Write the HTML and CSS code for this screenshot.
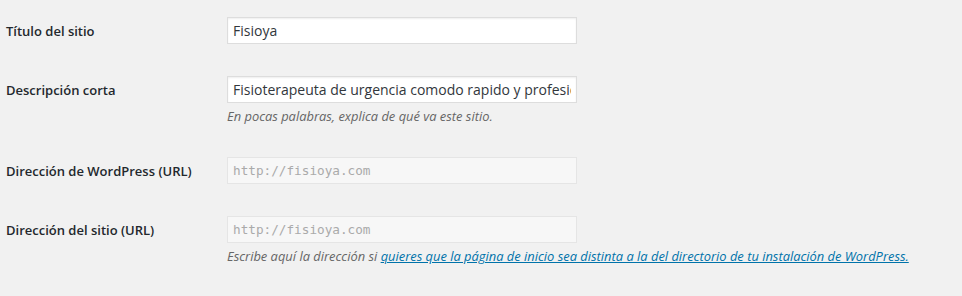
FILE: index.html
```
<!DOCTYPE html>
<html lang="es">
<head>
  <meta charset="utf-8">
  <title>Opciones generales</title>
  <link rel="stylesheet" href="styles.css">
</head>
<body>
  <table class="form-table">
    <tr>
      <th><label for="blogname">Título del sitio</label></th>
      <td><input id="blogname" type="text" class="regular-text" value="Fisioya"></td>
    </tr>
    <tr>
      <th><label for="blogdescription">Descripción corta</label></th>
      <td>
        <input id="blogdescription" type="text" class="regular-text" value="Fisioterapeuta de urgencia comodo rapido y profesional">
        <p class="description">En pocas palabras, explica de qué va este sitio.</p>
      </td>
    </tr>
    <tr>
      <th><label for="siteurl">Dirección de WordPress (URL)</label></th>
      <td><input id="siteurl" type="text" class="regular-text code" value="http://fisioya.com" disabled></td>
    </tr>
    <tr>
      <th><label for="home">Dirección del sitio (URL)</label></th>
      <td>
        <input id="home" type="text" class="regular-text code" value="http://fisioya.com" disabled>
        <p class="description">Escribe aquí la dirección si <a href="#">quieres que la página de inicio sea distinta a la del directorio de tu instalación de WordPress.</a></p>
      </td>
    </tr>
  </table>
</body>
</html>
```

FILE: styles.css
```
body {
  margin: 0;
  padding: 1px 0 0 6px;
  background: #f1f1f1;
  color: #444;
  font-family: "Open Sans", sans-serif;
  font-size: 13px;
}
.form-table {
  border-collapse: collapse;
}
.form-table th {
  width: 200px;
  padding: 22px 10px 18px 0;
  vertical-align: top;
  text-align: left;
  font-weight: 600;
  font-size: 13px;
  line-height: 1.3;
  color: #23282d;
}
.form-table td {
  padding: 15px 10px 15px 11px;
  vertical-align: top;
  line-height: 1.3;
}
.regular-text {
  display: block;
  box-sizing: border-box;
  width: 350px;
  height: 27px;
  margin: 1px 0;
  padding: 3px 5px;
  border: 1px solid #ddd;
  box-shadow: inset 0 1px 2px rgba(0, 0, 0, 0.07);
  background: #fff;
  color: #32373c;
  font-family: "Open Sans", sans-serif;
  font-size: 14px;
  outline: none;
}
.regular-text.code {
  font-family: "DejaVu Sans Mono", monospace;
  font-size: 12.7px;
}
.regular-text:disabled {
  background: #f7f7f7;
  border-color: #e5e5e5;
  color: #aaa;
  box-shadow: none;
}
.description {
  margin: 3px 0 0;
  color: #666;
  font-style: italic;
  font-size: 12.9px;
  line-height: 20px;
}
.description a {
  color: #0073aa;
}
```
